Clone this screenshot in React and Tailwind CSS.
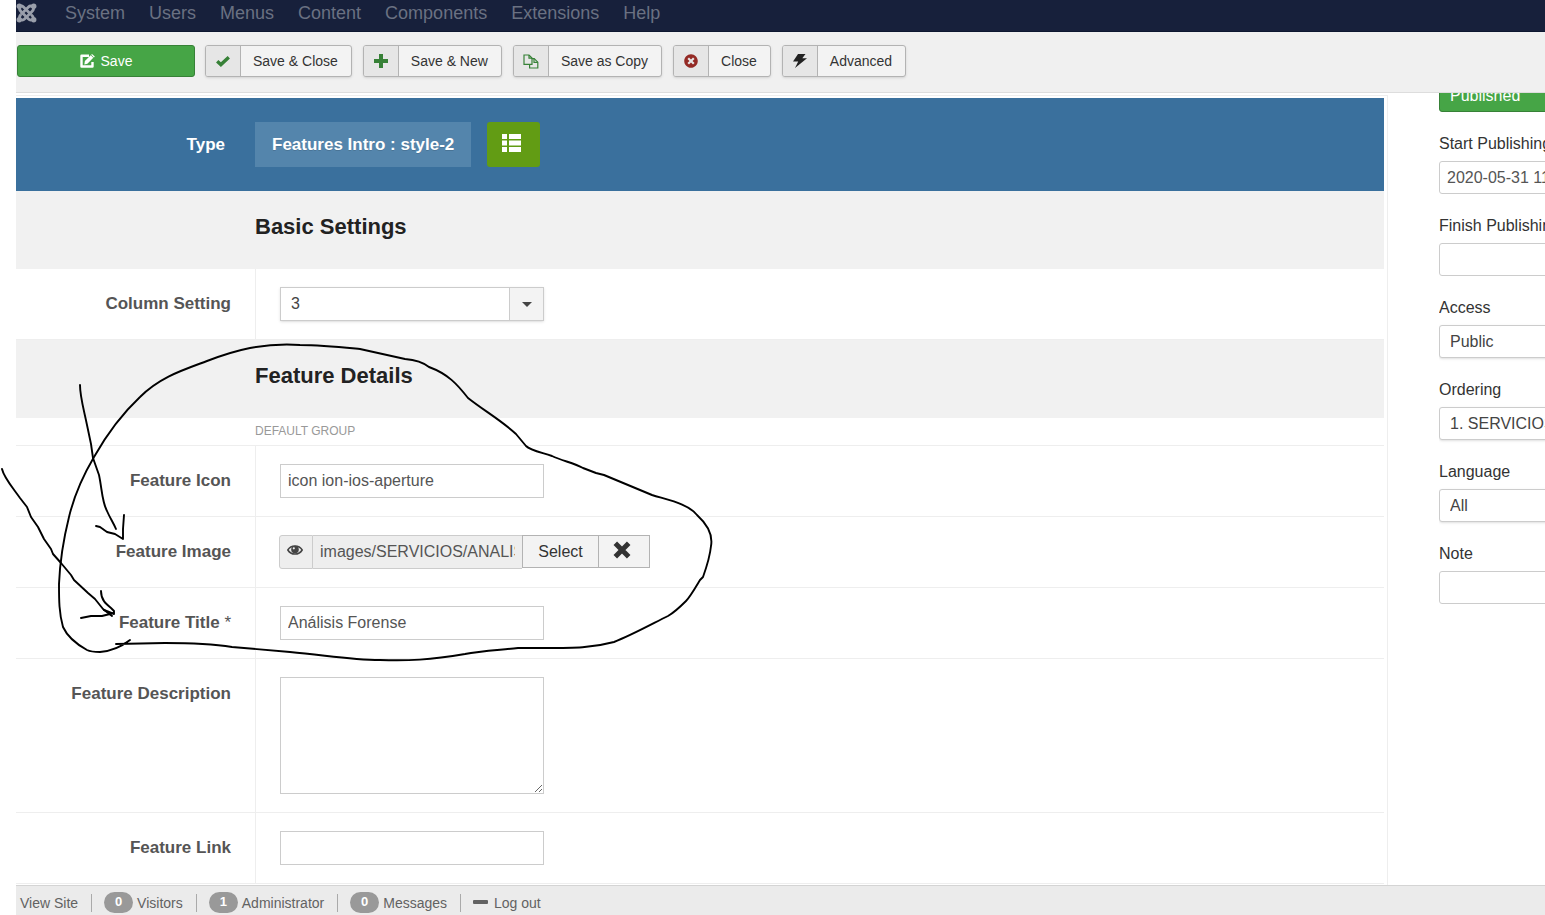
import React from "react";
import { FaTimesCircle } from "react-icons/fa";

const MENU = ["System", "Users", "Menus", "Content", "Components", "Extensions", "Help"];

function JoomlaIcon() {
  return (
    <svg width="21" height="20" viewBox="0 0 21 20" fill="none" stroke="currentColor">
      <g strokeWidth="2.800" strokeLinejoin="round">
        <path d="M3 4.500C4 2.500 6 2.500 7.500 4l7.500 7.500" />
        <path d="M17 4C15 2.500 13.500 3 12.500 4L5 11.500" />
        <path d="M4 16c2 1.500 3.500 1 4.500 0L16 8.500c1.500-1.500 2-3 1-4.500" />
        <path d="M17 16c-2 1.500-3.500 1-4.500 0L5 8.500C3.500 7 3 5.500 4 4" />
        <path d="M5 11.500C3.500 13 3 14.500 4 16M15 11.500c2 1.500 2.500 3 2 4.500" />
      </g>
      <g fill="currentColor" stroke="none">
        <circle cx="3.300" cy="3.300" r="2.700" />
        <circle cx="17.700" cy="3.300" r="2.700" />
        <circle cx="3.300" cy="16.700" r="2.700" />
        <circle cx="17.700" cy="16.700" r="2.700" />
      </g>
    </svg>
  );
}

function PencilIcon() {
  return (
    <svg width="15" height="14" viewBox="0 0 15 14" fill="none">
      <path d="M9 1.800H1.500V12.500H12.500V8" stroke="currentColor" strokeWidth="2.400" strokeLinejoin="round" />
      <path d="M4.300 10.400l.6-3.400L10.700 1.200l2.600 2.500-5.900 6z" fill="currentColor" />
      <path d="M12 0l2.800 2.600-.9.800L11.200.8z" fill="currentColor" />
    </svg>
  );
}

function CheckIcon() {
  return (
    <svg width="14" height="11" viewBox="0 0 14 11" fill="none" stroke="#378137" strokeWidth="3.400">
      <path d="M1.200 5.200l3.700 3.400 7.900-7.300" />
    </svg>
  );
}

function PlusIcon() {
  return (
    <svg width="14" height="14" viewBox="0 0 14 14" fill="#378137">
      <path d="M5 0h4v5h5v4H9v5H5V9H0V5h5z" />
    </svg>
  );
}

function CopyIcon() {
  return (
    <svg width="16" height="15" viewBox="0 0 16 15" fill="none" stroke="#378137" strokeWidth="1.200">
      <path d="M6 10.400H1V1h5l3 3v1" />
      <path d="M6 1v3.200h3" />
      <path d="M9 4.600h2.200l3.600 3.600V14H6.600v-3.600H9z" />
      <path d="M11 4.600v3.800h3.800" />
    </svg>
  );
}

function BoltIcon() {
  return (
    <svg width="14" height="14" viewBox="0 0 14 14" fill="#222">
      <path d="M5 0h7.500L9.300 4.200H14L2 14l3.200-6.500H0z" />
    </svg>
  );
}

function ListIcon() {
  return (
    <svg width="19" height="18" viewBox="0 0 19 18" fill="#fff">
      <path d="M0 0h5v5H0zM7 0h12v5H7zM0 6.500h5v5H0zM7 6.500h12v5H7zM0 13h5v5H0zM7 13h12v5H7z" />
    </svg>
  );
}

function EyeIcon() {
  return (
    <svg width="16" height="12" viewBox="0 0 16 12">
      <path d="M.8 6C4 .6 12 .6 15.200 6 12 11.400 4 11.400.8 6z" fill="none" stroke="#444" strokeWidth="1.500" />
      <circle cx="8" cy="5.500" r="3.800" fill="#444" />
      <circle cx="6.800" cy="4.300" r="1.100" fill="#eee" />
    </svg>
  );
}

function CrossIcon() {
  return (
    <svg width="18" height="18" viewBox="0 0 18 18" stroke="#333" strokeWidth="5">
      <path d="M2.300 2.300l13.400 13.400M15.700 2.300L2.300 15.700" />
    </svg>
  );
}

function ToolButton({ icon, children }) {
  return (
    <button
      type="button"
      className="flex h-8 items-stretch overflow-hidden rounded-[3px] border border-[#b3b3b3] bg-[#f3f3f3] text-sm text-[#333] shadow-sm"
    >
      <span className="flex w-[35px] items-center justify-center border-r border-[#b3b3b3] bg-[#e6e6e6]">{icon}</span>
      <span className="self-center pr-[13px] pl-3">{children}</span>
    </button>
  );
}

function SectionTitle({ children }) {
  return (
    <div className="h-[78px] bg-[#f1f1f1] pt-5 pl-[239px]">
      <h3 className="text-[22px] leading-8 font-bold text-[#222]">{children}</h3>
    </div>
  );
}

function Row({ id, label, required, children }) {
  return (
    <div className="flex border-b border-[#eee]">
      <div className="w-[239px] shrink-0 pt-[19px] pr-6 text-right">
        <label htmlFor={id} className="text-[17px] leading-8 font-bold text-[#555]">
          {label}
          {required && <span className="font-normal"> *</span>}
        </label>
      </div>
      <div className="flex flex-1 border-l border-[#eee] py-[18px] pl-6">{children}</div>
    </div>
  );
}

function TextInput({ id, value }) {
  return (
    <input
      id={id}
      type="text"
      defaultValue={value}
      className="h-[34px] w-[264px] border border-[#ccc] bg-white px-[7px] text-base text-[#555]"
    />
  );
}

function SideField({ id, label, children }) {
  return (
    <div className="mb-[19px] flex flex-col">
      <label htmlFor={id} className="mb-1 text-base leading-[26px] whitespace-nowrap text-[#333]">
        {label}
      </label>
      {children}
    </div>
  );
}

function SideInput({ id, value }) {
  return (
    <input
      id={id}
      type="text"
      defaultValue={value}
      className="h-[33px] w-[270px] rounded-[3px] border border-[#ccc] px-[7px] text-base text-[#555]"
    />
  );
}

function SideSelect({ id, value }) {
  return (
    <select
      id={id}
      className="h-[33px] w-[270px] appearance-none rounded-[3px] border border-[#ccc] bg-white px-2.5 text-base text-[#444] shadow-sm"
    >
      <option>{value}</option>
    </select>
  );
}

function Counter({ count, label }) {
  return (
    <a href="#" className="flex items-center gap-1">
      <span className="flex h-[21px] w-[29px] items-center justify-center rounded-full bg-[#999] text-[13px] font-bold text-white">
        {count}
      </span>
      {label}
    </a>
  );
}

function Divider() {
  return <span className="mr-3 ml-[13px] h-[18px] w-px bg-[#aaa]" />;
}

// freehand circle and the two arrows over the form
function PenMarks() {
  return (
    <svg
      className="pointer-events-none absolute top-0 left-0"
      width="760"
      height="700"
      fill="none"
      stroke="#000"
      strokeWidth="1.900"
      strokeLinecap="round"
      strokeLinejoin="round"
    >
      <path d="M130 640C121 647 113 651 100 652Q91 652 87 650C78 645 68 638 63 627C59 613 59 600 59 584C60 560 64 537 69 517C74 496 84 474 94 457C107 434 124 412 140 397C160 377 183 370 207 361C220 356 235 351 250 348C266 345 285 344 300 345C322 345 340 347 360 349L405 359C417 360 424 363 429 367C448 374 457 384 468 398C483 410 501 420 516 434L526 446C530 450 536 451 552 456C563 461 574 463 583 468L596 473L604 475L652 495C672 501 688 504 697 515C708 525 713 535 711 546C710 556 708 563 703 577L700 580C694 590 690 597 686 601C680 607 675 612 668 616C650 625 630 636 614 642C592 648 575 648 545 648H518C500 650 480 651 465 654C430 660 408 661 380 660C350 660 325 655 290 652L232 647C213 644 190 643 165 643L116 644" />
      <path d="M80 385C80 397 84 410 87 425L91 444L93 458L99 475C102 489 102 502 107 511C110 518 113 522 116 529" />
      <path d="M96 526L100 527L107 532L115 534L123 539V529L124 515" />
      <path d="M2 469C4 478 13 488 20 498L27 507L31 517L38 527L44 539L51 549L53 554L61 563L71 575L74 580L88 593L95 599L103 609L112 616" />
      <path d="M101 591C101 600 106 604 111 608L114 611V614L104 610M114 613L102 616L91 616L81 618" />
    </svg>
  );
}

export default function App() {
  return (
    <div className="relative flex h-screen flex-col overflow-hidden bg-white pl-4 font-['Liberation_Sans',Arial,sans-serif]">
      <nav className="flex h-8 shrink-0 items-center border-b border-[#0d1730] bg-[#17203b] pb-1.5 text-lg text-[#6a7182]">
        <a href="#" className="mr-7 text-[#9a9fab]" aria-label="Joomla">
          <JoomlaIcon />
        </a>
        <div className="flex gap-6">
          {MENU.map((item) => (
            <a key={item} href="#">
              {item}
            </a>
          ))}
        </div>
      </nav>

      <div className="flex h-[61px] shrink-0 items-start gap-[11px] border-b border-[#ddd] bg-[#f0f0f0] pt-[13px] pl-px">
        <button
          type="button"
          className="-mr-px flex h-8 w-[178px] items-center justify-center gap-1.5 rounded-[3px] border border-[#378137] bg-[#46a546] text-sm text-white"
        >
          <PencilIcon />
          Save
        </button>
        <ToolButton icon={<CheckIcon />}>Save &amp; Close</ToolButton>
        <ToolButton icon={<PlusIcon />}>Save &amp; New</ToolButton>
        <ToolButton icon={<CopyIcon />}>Save as Copy</ToolButton>
        <ToolButton icon={<FaTimesCircle size={14} color="#942a25" />}>Close</ToolButton>
        <ToolButton icon={<BoltIcon />}>Advanced</ToolButton>
      </div>

      <div className="flex min-h-0 flex-1 overflow-hidden">
        <main className="mt-0.5 flex-1 border-t border-r border-[#eee] pt-0.5 pr-[3px]">
          <div className="flex h-[93px] items-center bg-[#3a709d] text-[17px] font-bold text-white">
            <span className="w-[239px] pr-[30px] text-right">Type</span>
            <span className="flex h-[45px] items-center bg-[#5485ac] px-[17px] text-shadow-2xs">Features Intro : style-2</span>
            <button
              type="button"
              aria-label="Choose type"
              className="ml-4 flex h-[45px] w-[53px] items-center justify-center rounded-[3px] bg-[#629c14] pr-1 pb-1"
            >
              <ListIcon />
            </button>
          </div>

          <SectionTitle>Basic Settings</SectionTitle>
          <Row id="columns" label="Column Setting">
            <div className="relative">
              <select
                id="columns"
                className="h-[34px] w-[264px] appearance-none border border-[#ccc] bg-white px-2.5 text-base text-[#444] shadow-sm"
              >
                <option>3</option>
              </select>
              <span className="pointer-events-none absolute top-px right-px bottom-px flex w-[34px] items-center justify-center border-l border-[#ccc] bg-[#f3f3f3]">
                <svg width="10" height="5" viewBox="0 0 10 5" fill="#444">
                  <path d="M0 0h10L5 5z" />
                </svg>
              </span>
            </div>
          </Row>

          <SectionTitle>Feature Details</SectionTitle>
          <p className="border-b border-[#eee] pl-[239px] text-xs leading-[27px] text-[#999]">DEFAULT GROUP</p>
          <Row id="icon" label="Feature Icon">
            <TextInput id="icon" value="icon ion-ios-aperture" />
          </Row>
          <Row id="image" label="Feature Image">
            <div className="-ml-px flex h-[34px] items-start">
              <span className="flex h-[34px] w-[34px] items-center justify-center rounded-l-[3px] border border-[#ccc] bg-[#eee] pr-0.5 pb-1">
                <EyeIcon />
              </span>
              <div className="h-[34px] w-[209px] border-y border-[#ccc] bg-[#eee] px-[7px]">
                <input
                  id="image"
                  type="text"
                  readOnly
                  defaultValue="images/SERVICIOS/ANALISIS.png"
                  className="h-8 w-full text-base text-[#555]"
                />
              </div>
              <button type="button" className="h-[33px] w-[77px] border border-[#b3b3b3] bg-[#f3f3f3] text-base text-[#333]">
                Select
              </button>
              <button
                type="button"
                aria-label="Clear"
                className="flex h-[33px] w-[51px] items-center justify-center border border-l-0 border-[#b3b3b3] bg-[#f3f3f3] pr-1 pb-1"
              >
                <CrossIcon />
              </button>
            </div>
          </Row>
          <Row id="title" label="Feature Title" required>
            <TextInput id="title" value="Análisis Forense" />
          </Row>
          <Row id="description" label="Feature Description">
            <textarea id="description" className="h-[117px] w-[264px] resize border border-[#ccc] bg-white p-2 text-base" />
          </Row>
          <Row id="link" label="Feature Link">
            <TextInput id="link" value="" />
          </Row>
        </main>

        <aside className="ml-[51px] w-[106px] shrink-0 overflow-hidden">
          <div className="mb-[19px] flex h-[19px] items-end overflow-hidden">
            <select
              aria-label="Status"
              className="h-[33px] w-[270px] shrink-0 appearance-none rounded-[3px] border border-[#378137] bg-[#46a546] px-2.5 text-base text-white"
            >
              <option>Published</option>
            </select>
          </div>
          <SideField id="start" label="Start Publishing">
            <SideInput id="start" value="2020-05-31 11:20:00" />
          </SideField>
          <SideField id="finish" label="Finish Publishing">
            <SideInput id="finish" value="" />
          </SideField>
          <SideField id="access" label="Access">
            <SideSelect id="access" value="Public" />
          </SideField>
          <SideField id="ordering" label="Ordering">
            <SideSelect id="ordering" value="1. SERVICIOS" />
          </SideField>
          <SideField id="language" label="Language">
            <SideSelect id="language" value="All" />
          </SideField>
          <SideField id="note" label="Note">
            <SideInput id="note" value="" />
          </SideField>
        </aside>
      </div>

      <footer className="flex h-[30px] shrink-0 items-center border-t border-[#d4d4d4] bg-[#ebebeb] pt-1 pl-1 text-sm text-[#626262]">
        <a href="#">View Site</a>
        <Divider />
        <Counter count={0} label="Visitors" />
        <Divider />
        <Counter count={1} label="Administrator" />
        <Divider />
        <Counter count={0} label="Messages" />
        <Divider />
        <a href="#" className="flex items-center gap-1.5">
          <span className="mb-0.5 h-1 w-[15px] rounded-[1px] bg-[#626262]" />
          Log out
        </a>
      </footer>

      <PenMarks />
    </div>
  );
}
